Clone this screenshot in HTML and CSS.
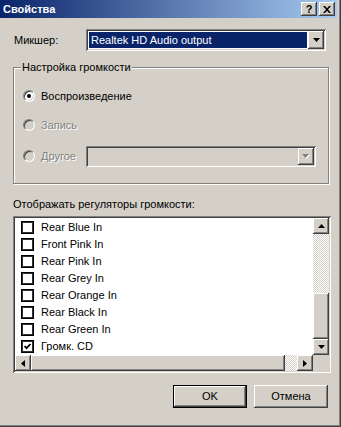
FILE: index.html
```html
<!DOCTYPE html>
<html lang="ru">
<head>
    <meta charset="UTF-8">
    <meta name="viewport" content="width=device-width, initial-scale=1.0">
    <title>Свойства</title>
    <link rel="stylesheet" href="styles.css">
</head>
<body>
    <div class="window">
        <div class="titlebar">
            <span class="title">Свойства</span>
            <div class="caption-buttons">
                <button class="caption-btn">?</button>
                <button class="caption-btn">
                    <svg width="8" height="7" viewBox="0 0 8 7"><path d="M0 0h2l2 2.3L6 0h2L5 3.5 8 7H6L4 4.7 2 7H0l3-3.5z"/></svg>
                </button>
            </div>
        </div>

        <div class="content">
            <div class="mixer-row">
                <span class="mixer-label">Микшер:</span>
                <div class="combo mixer-combo">
                    <div class="combo-value"><span class="selected">Realtek HD Audio output</span></div>
                    <div class="combo-btn">
                        <svg width="7" height="4" viewBox="0 0 7 4"><polygon points="0,0 7,0 3.5,4"/></svg>
                    </div>
                </div>
            </div>

            <fieldset class="group">
                <legend>Настройка громкости</legend>
                <div class="group-rows">
                    <div class="radio-row"><span class="radio checked"></span><span>Воспроизведение</span></div>
                    <div class="radio-row disabled"><span class="radio"></span><span>Запись</span></div>
                    <div class="radio-row disabled">
                        <span class="radio"></span><span class="other-label">Другое</span>
                        <div class="combo other-combo">
                            <div class="combo-value"></div>
                            <div class="combo-btn">
                                <svg width="8" height="5" viewBox="0 0 8 5"><polygon points="1,1 8,1 4.5,5" fill="#fff"/><polygon points="0,0 7,0 3.5,4" fill="#808080"/></svg>
                            </div>
                        </div>
                    </div>
                </div>
            </fieldset>

            <div class="list-label">Отображать регуляторы громкости:</div>

            <div class="listbox">
                <div class="list-items">
                    <div class="list-item"><span class="check"></span>Rear Blue In</div>
                    <div class="list-item"><span class="check"></span>Front Pink In</div>
                    <div class="list-item"><span class="check"></span>Rear Pink In</div>
                    <div class="list-item"><span class="check"></span>Rear Grey In</div>
                    <div class="list-item"><span class="check"></span>Rear Orange In</div>
                    <div class="list-item"><span class="check"></span>Rear Black In</div>
                    <div class="list-item"><span class="check"></span>Rear Green In</div>
                    <div class="list-item">
                        <span class="check"><svg width="9" height="9" viewBox="0 0 9 9"><polyline points="1.5,4 3.5,6.2 7.5,2" fill="none" stroke="#000" stroke-width="1.8"/></svg></span>Громк. CD
                    </div>
                </div>
                <div class="vscroll">
                    <div class="scroll-btn">
                        <svg width="7" height="4" viewBox="0 0 7 4"><polygon points="3.5,0 7,4 0,4"/></svg>
                    </div>
                    <div class="track v-track-top"></div>
                    <div class="thumb v-thumb"></div>
                    <div class="scroll-btn">
                        <svg width="7" height="4" viewBox="0 0 7 4"><polygon points="0,0 7,0 3.5,4"/></svg>
                    </div>
                </div>
                <div class="hscroll">
                    <div class="scroll-btn">
                        <svg width="4" height="7" viewBox="0 0 4 7"><polygon points="4,0 4,7 0,3.5"/></svg>
                    </div>
                    <div class="thumb h-thumb"></div>
                    <div class="track h-track-end"></div>
                    <div class="scroll-btn">
                        <svg width="4" height="7" viewBox="0 0 4 7"><polygon points="0,0 4,3.5 0,7"/></svg>
                    </div>
                </div>
                <div class="scroll-corner"></div>
            </div>

            <div class="dialog-buttons">
                <button class="btn default">OK</button>
                <button class="btn">Отмена</button>
            </div>
        </div>
    </div>
</body>
</html>
```

FILE: styles.css
```css
* {
    margin: 0;
    padding: 0;
    box-sizing: border-box;
}
body {
    background: #d4d0c8;
    overflow: hidden;
    font-family: "Liberation Sans", Arial, sans-serif;
    font-size: 11px;
    line-height: 13px;
    color: #000;
}
.window {
    width: 341px;
    height: 427px;
    padding: 0 4px 4px 0;
    background: #d4d0c8;
    box-shadow: inset -1px -1px #404040, inset -2px -2px #808080;
}
.titlebar {
    height: 18px;
    display: flex;
    align-items: center;
    justify-content: space-between;
    padding: 0 2px 0 3px;
    background: linear-gradient(90deg, #0a246a, #a6caf0);
}
.title {
    color: #fff;
    font-weight: bold;
}
.caption-buttons {
    display: flex;
    gap: 2px;
}
.caption-btn {
    width: 16px;
    height: 14px;
    border: none;
    background: #d4d0c8;
    font: bold 11px/12px "Liberation Sans", Arial, sans-serif;
    display: flex;
    align-items: center;
    justify-content: center;
    box-shadow: inset -1px -1px #404040, inset 1px 1px #fff, inset -2px -2px #808080, inset 2px 2px #d4d0c8;
}
.content {
    padding: 0 6px 0 13px;
}
.mixer-row {
    margin-top: 11px;
    display: flex;
    align-items: center;
    height: 22px;
}
.mixer-label {
    width: 73px;
    padding-left: 1px;
}
.combo {
    display: flex;
    padding: 2px;
    background: #fff;
    box-shadow: inset 1px 1px #808080, inset -1px -1px #fff, inset 2px 2px #404040, inset -2px -2px #d4d0c8;
}
.mixer-combo {
    width: 240px;
    height: 22px;
}
.combo-value {
    flex: 1;
    display: flex;
    padding: 1px;
}
.selected {
    flex: 1;
    background: #0a246a;
    color: #fff;
    padding-left: 2px;
    display: flex;
    align-items: center;
}
.combo-btn {
    width: 16px;
    display: flex;
    align-items: center;
    justify-content: center;
    background: #d4d0c8;
    box-shadow: inset -1px -1px #404040, inset 1px 1px #fff, inset -2px -2px #808080, inset 2px 2px #d4d0c8;
}
.group {
    margin: 10px 2px 0 0;
    padding: 0;
    border: 1px solid #808080;
    box-shadow: inset 1px 1px #fff, 1px 1px #fff;
}
.group legend {
    margin-left: 7px;
    padding: 0 1px;
    background: #d4d0c8;
}
.group-rows {
    padding: 11px 12px 16px 9px;
}
.radio-row {
    display: flex;
    align-items: center;
    gap: 6px;
    height: 22px;
}
.radio-row + .radio-row {
    margin-top: 7px;
}
.radio-row + .radio-row + .radio-row {
    margin-top: 9px;
}
.radio {
    width: 12px;
    height: 12px;
    border-radius: 50%;
    border: 1px solid;
    border-color: #808080 #fff #fff #808080;
    background: #fff;
    box-shadow: inset 1px 1px #404040, inset -1px -1px #d4d0c8;
    display: flex;
    align-items: center;
    justify-content: center;
}
.radio.checked::after {
    content: "";
    width: 4px;
    height: 4px;
    border-radius: 50%;
    background: #000;
}
.disabled {
    color: #808080;
    text-shadow: 1px 1px #fff;
}
.disabled .radio {
    background: #d4d0c8;
}
.other-label {
    width: 39px;
}
.other-combo {
    width: 230px;
    height: 21px;
    background: #d4d0c8;
}
.list-label {
    margin-top: 14px;
}
.listbox {
    margin-top: 5px;
    padding: 2px;
    display: grid;
    grid-template-columns: 298px 16px;
    grid-template-rows: 137px 16px;
    background: #fff;
    box-shadow: inset 1px 1px #808080, inset -1px -1px #fff, inset 2px 2px #404040, inset -2px -2px #d4d0c8;
}
.list-items {
    padding: 1px 0 0 6px;
    overflow: hidden;
}
.list-item {
    height: 17px;
    display: flex;
    align-items: center;
    gap: 7px;
}
.check {
    width: 13px;
    height: 13px;
    border: 1px solid #000;
    box-shadow: inset 0 0 0 1px #303030;
    display: flex;
    align-items: center;
    justify-content: center;
}
.scroll-btn {
    width: 16px;
    height: 16px;
    flex: none;
    display: flex;
    align-items: center;
    justify-content: center;
    background: #d4d0c8;
    box-shadow: inset -1px -1px #404040, inset 1px 1px #fff, inset -2px -2px #808080, inset 2px 2px #d4d0c8;
}
.vscroll {
    display: flex;
    flex-direction: column;
}
.hscroll {
    display: flex;
}
.track {
    background: repeating-conic-gradient(#d4d0c8 0 25%, #fff 0 50%) 0 0 / 2px 2px;
}
.thumb {
    background: #d4d0c8;
    box-shadow: inset -1px -1px #404040, inset 1px 1px #fff, inset -2px -2px #808080, inset 2px 2px #d4d0c8;
}
.v-track-top {
    height: 59px;
}
.v-thumb {
    height: 46px;
}
.h-thumb {
    width: 254px;
}
.h-track-end {
    width: 12px;
}
.scroll-corner {
    background: #d4d0c8;
}
.dialog-buttons {
    margin: 12px 3px 0 0;
    display: flex;
    justify-content: flex-end;
    gap: 7px;
}
.btn {
    width: 74px;
    height: 23px;
    border: none;
    background: #d4d0c8;
    font: 11px/13px "Liberation Sans", Arial, sans-serif;
    color: #000;
    box-shadow: inset -1px -1px #404040, inset 1px 1px #fff, inset -2px -2px #808080, inset 2px 2px #d4d0c8;
}
.btn.default {
    box-shadow: inset 0 0 0 1px #000, inset -2px -2px #404040, inset 2px 2px #fff, inset -3px -3px #808080, inset 3px 3px #d4d0c8;
}
```
